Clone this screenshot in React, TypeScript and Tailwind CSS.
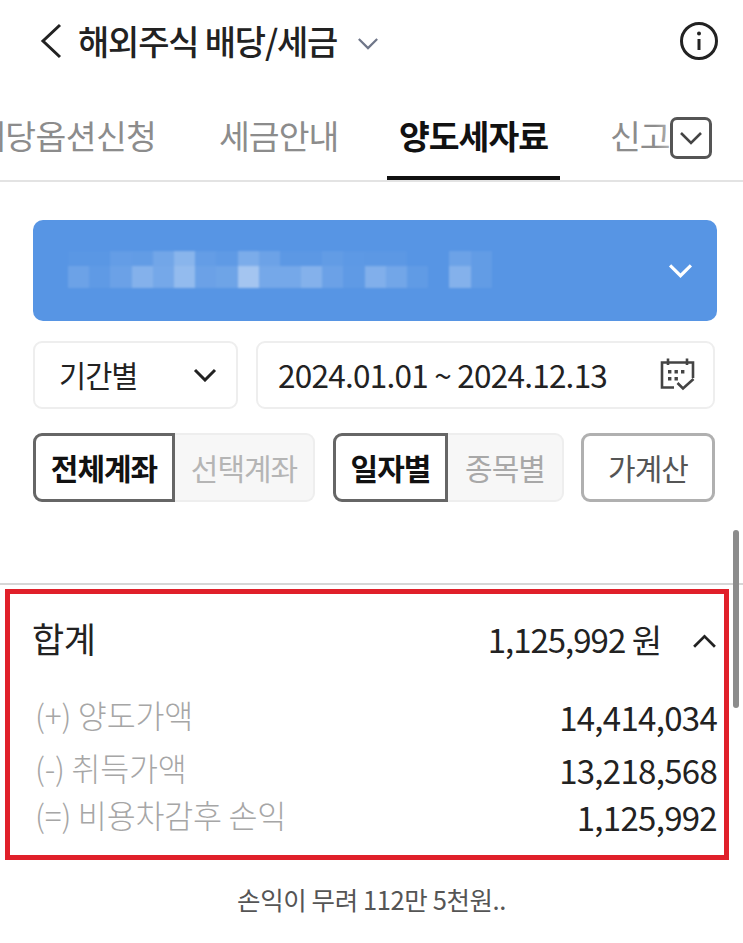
import React from 'react';

const font = "font-['Noto_Sans_CJK_KR','Noto_Sans',sans-serif]";

const mosaicTop = [0.02, 0.02, 0.08, 0.07, 0.16, 0.3, 0.08, 0.05, 0.22, 0.13, 0.03, 0.03, 0.07, 0.04, 0.03, 0.03, 0, 0, 0.13, 0.07];
const mosaicBottom = [0.13, 0.05, 0.12, 0.27, 0.18, 0.36, 0.12, 0.14, 0.46, 0.18, 0.18, 0.27, 0.12, 0.05, 0.25, 0.16, 0.06, 0, 0.27, 0.07];

function Chevron({ className, up, stroke = 3 }: { className: string; up?: boolean; stroke?: number }) {
  return (
    <svg viewBox="0 0 24 14" fill="none" className={className}>
      <path
        d={up ? 'M2 12 L12 2 L22 12' : 'M2 2 L12 12 L22 2'}
        stroke="currentColor"
        strokeWidth={stroke}
      />
    </svg>
  );
}

function CalendarCheck() {
  return (
    <svg viewBox="0 0 35 34" fill="none" className="w-[35px] h-[34px] text-[#444]">
      <path d="M14 29.5H2V4.5H33V20" stroke="currentColor" strokeWidth="2.6" />
      <path d="M8 0.5V7M27 0.5V7" stroke="currentColor" strokeWidth="2.6" />
      <path d="M17.5 25L23 30.5L33.5 21" stroke="currentColor" strokeWidth="2.6" />
      <path
        d="M8 12h3.4v3.4H8zM14.5 12h3.4v3.4h-3.4zM21 12h3.4v3.4H21zM8 19h3.4v3.4H8zM14.5 19h3.4v3.4h-3.4z"
        fill="currentColor"
      />
    </svg>
  );
}

function SummaryRow({ label, value, className }: { label: string; value: string; className: string }) {
  return (
    <div className={`flex items-center justify-between ${className}`}>
      <span className="-ml-[1px] text-[31.5px] leading-[40px] tracking-[-0.2px] text-[#a6a6a6] font-light">{label}</span>
      <span className="text-[33px] leading-[40px] tracking-[-0.7px] text-[#222] translate-y-[3px]">{value}</span>
    </div>
  );
}

export default function App() {
  return (
    <div className={`relative w-[743px] h-[943px] overflow-hidden bg-white ${font}`}>
      {/* Header */}
      <header className="flex items-center h-[82px] pl-[40px] pr-[25px]">
        <svg viewBox="0 0 22 36" fill="none" className="w-[22px] h-[36px] text-[#222]">
          <path d="M20 2 L3 18 L20 34" stroke="currentColor" strokeWidth="3" />
        </svg>
        <h1 className="ml-[16px] text-[34px] leading-[40px] font-medium tracking-[-1.2px] text-[#222] whitespace-nowrap">
          해외주식 배당/세금
        </h1>
        <Chevron className="ml-[20px] mt-[4px] w-[22px] h-[13px] text-[#6f7689]" stroke={2.4} />
        <svg viewBox="0 0 38 38" fill="none" className="ml-auto w-[38px] h-[38px] text-[#222]">
          <circle cx="19" cy="19" r="17.5" stroke="currentColor" strokeWidth="3" />
          <circle cx="19" cy="11.5" r="2" fill="currentColor" />
          <path d="M19 17V28" stroke="currentColor" strokeWidth="3" />
        </svg>
      </header>

      {/* Tabs */}
      <nav className="relative flex h-[100px] overflow-hidden border-b-2 border-[#e3e3e3] text-[33.5px] whitespace-nowrap">
        <div className="flex -ml-[25px] pt-[30px]">
          <span className="w-[182px] text-[#8c8c8c] tracking-[-0.6px] leading-[46px]">배당옵션신청</span>
          <span className="ml-[62px] w-[120px] text-[#8c8c8c] tracking-[-1px] leading-[46px]">세금안내</span>
          <div className="ml-[48px] w-[173px] h-[68px] border-b-4 border-[#111] text-center font-bold text-[#111] tracking-[-1px] leading-[46px]">
            양도세자료
          </div>
          <span className="ml-[50px] text-[#8c8c8c] tracking-[-1px] leading-[46px]">신고</span>
        </div>
        <div className="absolute right-0 top-0 h-[97px] w-[88px] bg-gradient-to-r from-white/0 via-white to-white" />
        <div className="absolute left-[670px] top-[35px] flex items-center justify-center w-[42px] h-[42px] rounded-[7px] border-[3px] border-[#555] bg-white">
          <Chevron className="w-[24px] h-[14px] text-[#444]" stroke={2.6} />
        </div>
      </nav>

      {/* Filters */}
      <section className="pl-[33px] pr-[26px] pt-[38px]">
        <div className="flex items-center justify-between h-[101px] rounded-[10px] bg-[#5795e4] pl-[35px] pr-[24px]">
          <div className="mt-[-3px] blur-[1px]">
            <div className="flex">
              {mosaicTop.map((a, i) => (
                <span key={i} className="w-[21.2px] h-[15px] bg-white" style={{ opacity: a }} />
              ))}
            </div>
            <div className="flex">
              {mosaicBottom.map((a, i) => (
                <span key={i} className="w-[21.2px] h-[22px] bg-white" style={{ opacity: a }} />
              ))}
            </div>
          </div>
          <Chevron className="w-[25px] h-[15px] text-white" />
        </div>

        <div className="flex gap-[18px] mt-[20px] h-[68px] text-[#222]">
          <div className="flex items-center justify-between w-[205px] rounded-[9px] border-2 border-[#eeeeee] pl-[24px] pr-[19px]">
            <span className="text-[29.5px] tracking-[-1px] -translate-y-[1px]">기간별</span>
            <Chevron className="w-[24px] h-[14px] text-[#222]" />
          </div>
          <div className="flex items-center justify-between flex-1 rounded-[9px] border-2 border-[#eeeeee] pl-[20px] pr-[18px] mr-[2px]">
            <span className="text-[31.5px] tracking-[-0.75px] whitespace-nowrap">2024.01.01 ~ 2024.12.13</span>
            <CalendarCheck />
          </div>
        </div>

        <div className="flex mt-[24px] h-[69px] text-[30px] tracking-[-1px]">
          <div className="flex w-[282px]">
            <div className="flex items-center justify-center w-[142px] rounded-l-[9px] border-[3px] border-[#666] font-bold text-[#111]">
              전체계좌
            </div>
            <div className="flex items-center justify-center flex-1 rounded-r-[9px] border-2 border-l-0 border-[#eeeeee] bg-[#f7f7f7] text-[#b5b5b5]">
              선택계좌
            </div>
          </div>
          <div className="flex w-[231px] ml-[18px]">
            <div className="flex items-center justify-center w-[115px] rounded-l-[9px] border-[3px] border-[#666] font-bold text-[#111]">
              일자별
            </div>
            <div className="flex items-center justify-center flex-1 rounded-r-[9px] border-2 border-l-0 border-[#eeeeee] bg-[#f7f7f7] text-[#a8a8a8]">
              종목별
            </div>
          </div>
          <div className="flex items-center justify-center w-[134px] ml-[17px] rounded-[9px] border-[3px] border-[#b0b0b0] text-[#555]">
            가계산
          </div>
        </div>
      </section>

      <div className="mt-[81px] h-[2px] bg-[#d6d6d6]" />

      {/* Summary */}
      <section className="ml-[5px] mt-[4px] w-[724px] h-[271px] border-[5px] border-[#e0202a] pl-[23px] pr-[7px] pt-[20px]">
        <div className="flex items-center h-[48px] text-[#222]">
          <span className="text-[35px] tracking-[-0.5px] -translate-x-[1px]">합계</span>
          <span className="ml-auto text-[33px] tracking-[-1px] translate-y-[2px]">1,125,992 원</span>
          <Chevron up className="ml-[31px] mt-[6px] w-[25px] h-[15px] text-[#222]" stroke={2.6} />
        </div>
        <div className="pl-[3px]">
          <SummaryRow label="(+) 양도가액" value="14,414,034" className="mt-[32px]" />
          <SummaryRow label="(-) 취득가액" value="13,218,568" className="mt-[13px]" />
          <SummaryRow label="(=) 비용차감후 손익" value="1,125,992" className="mt-[7px]" />
        </div>
      </section>

      <p className="mt-[23px] text-center text-[25.5px] leading-[32px] tracking-[-0.4px] text-[#555]">
        손익이 무려 112만 5천원..
      </p>

      {/* Scrollbar */}
      <div className="absolute left-[733px] top-[530px] w-[6px] h-[178px] rounded-full bg-[#8c8c8c]" />
    </div>
  );
}
